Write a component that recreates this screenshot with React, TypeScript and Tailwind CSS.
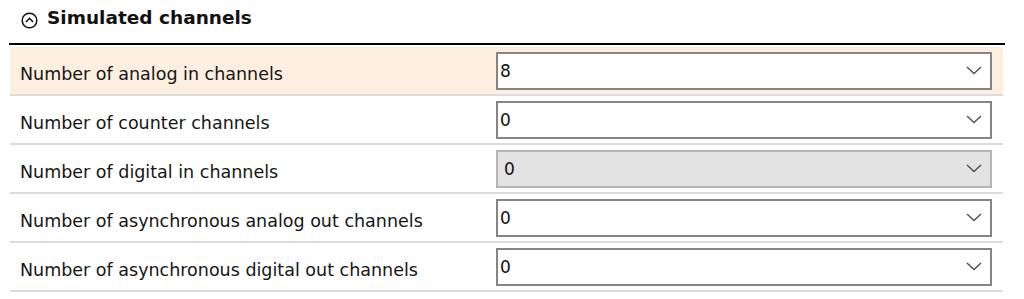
const rows = [
    { label: 'Number of analog in channels', value: '8', active: true },
    { label: 'Number of counter channels', value: '0' },
    { label: 'Number of digital in channels', value: '0', disabled: true },
    { label: 'Number of asynchronous analog out channels', value: '0' },
    { label: 'Number of asynchronous digital out channels', value: '0' },
]

const Chevron = () => (
    <svg width="16" height="9" viewBox="0 0 16 9" fill="none">
        <polyline points="1,1 8,7.5 15,1" stroke="#505050" strokeWidth="1.4" />
    </svg>
)

const Dropdown = ({ value, disabled }: { value: string; disabled?: boolean }) => (
    <div
        className={`flex items-center justify-between h-[38px] w-[496px] border-2 pr-[8px] ${disabled ? 'bg-[#e3e3e3] border-[#b4b4b4] pl-[6px]' : 'bg-white border-[#858585] pl-[2px]'}`}
    >
        <span className="text-[17px] text-[#111111] pt-[3px]">{value}</span>
        <Chevron />
    </div>
)

export default function App() {
    return (
        <div className="w-[1024px] h-[299px] bg-white font-['DejaVu_Sans',sans-serif] overflow-hidden">
            <div className="ml-[9px] w-[996px]">
                {/* header */}
                <div className="h-[43px] flex items-center pl-[12px] gap-[9px]">
                    <svg width="17" height="17" viewBox="0 0 17 17" fill="none" className="mb-[2px]">
                        <circle cx="8.5" cy="8.5" r="7.3" stroke="#111111" strokeWidth="1.5" />
                        <polyline points="5,10 8.5,6.3 12,10" stroke="#111111" strokeWidth="1.6" />
                    </svg>
                    <span className="text-[18.5px] font-bold text-[#111111] leading-none mb-[6px]">Simulated channels</span>
                </div>
                <div className="h-[2px] bg-black" />
                <div className="h-[2px]" />
                {rows.map((r) => (
                    <div
                        key={r.label}
                        className={`h-[49px] border-b-2 border-[#dcdcdc] flex items-center ml-[1px] mr-[2px] ${r.active ? 'bg-[#fdefdf]' : ''}`}
                    >
                        <div className="w-[486px] pl-[10px] text-[17.5px] text-[#151515] pt-[8px]">{r.label}</div>
                        <Dropdown value={r.value} disabled={r.disabled} />
                    </div>
                ))}
            </div>
        </div>
    )
}
